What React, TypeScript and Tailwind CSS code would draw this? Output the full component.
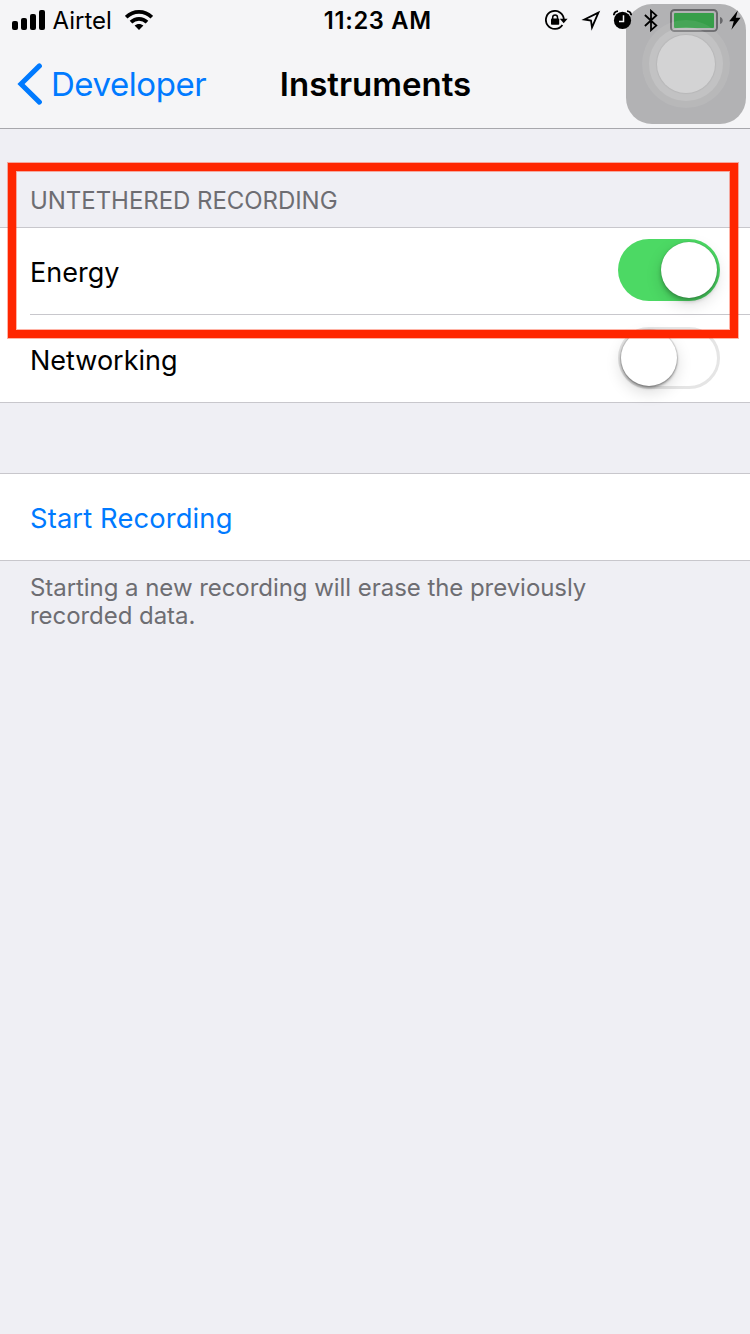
import React from "react";

const FONT = "font-['Inter','Liberation_Sans',sans-serif]";

function SignalIcon() {
  return (
    <svg className="ml-3 h-5 w-[33px] shrink-0" viewBox="0 0 33 20">
      <rect x="0" y="11" width="6" height="9" rx="2" />
      <rect x="9" y="8" width="6" height="12" rx="2" />
      <rect x="18" y="4" width="6" height="16" rx="2" />
      <rect x="27" y="0" width="6" height="20" rx="2" />
    </svg>
  );
}

function WifiIcon() {
  return (
    <svg className="h-5 w-7 shrink-0" viewBox="0 0 28 20">
      <g fill="none" stroke="#000" strokeWidth="3.7">
        <path d="M1.2 7.2C8.4 0.1 19.6 0.1 26.8 7.2" />
        <path d="M6 12.1C10.5 7.7 17.5 7.7 22 12.1" />
      </g>
      <path d="M9.6 15.6C12 13.3 16 13.3 18.4 15.6L14 20Z" />
    </svg>
  );
}

function RotationLockIcon() {
  return (
    <svg className="h-5 w-[23px] shrink-0" viewBox="0 0 23 20">
      <path d="M17.4 14.9A9 9 0 1 1 18.9 9.6" fill="none" stroke="#000" strokeWidth="1.8" />
      <path d="M14.8 8.8H22.6L18.7 13.2Z" />
      <rect x="6" y="8.4" width="8.2" height="6.4" rx="0.8" />
      <path d="M7.7 9V7.3a2.4 2.4 0 0 1 4.8 0V9" fill="none" stroke="#000" strokeWidth="1.5" />
    </svg>
  );
}

function LocationIcon() {
  return (
    <svg className="h-[21px] w-5 shrink-0" viewBox="0 0 20 21">
      <path d="M17.4 2.6L3.4 9.5L10 10.5L11 17.4Z" fill="none" stroke="#000" strokeWidth="1.8" strokeMiterlimit="10" />
    </svg>
  );
}

function AlarmIcon() {
  return (
    <svg className="h-5 w-[19px] shrink-0" viewBox="0 0 19 20">
      <circle cx="9.5" cy="10.4" r="8.6" />
      <path d="M0.8 5.2C1 3 2.8 1.5 5 1.2M18.2 5.2C18 3 16.2 1.5 14 1.2" fill="none" stroke="#000" strokeWidth="1.8" />
      <path d="M10.5 5.2V11.4H6" fill="none" stroke="#f5f5f7" strokeWidth="1.5" />
    </svg>
  );
}

function BluetoothIcon() {
  return (
    <svg className="h-[23px] w-3.5 shrink-0" viewBox="0 0 14 23">
      <path d="M0.9 6L12.3 16.6L7 21.2V1.8L12.3 6.4L0.9 17" fill="none" stroke="#000" strokeWidth="1.8" />
    </svg>
  );
}

function BatteryIcon() {
  return (
    <svg className="h-[23px] w-[53px] shrink-0" viewBox="0 0 53 23">
      <rect x="1" y="1" width="46" height="21" rx="3.6" fill="none" stroke="#8f8f93" strokeWidth="2" />
      <rect x="4" y="4" width="40" height="15" rx="1" fill="#4cd964" />
      <path d="M50 8C53.6 8.8 53.6 14.2 50 15Z" fill="#8f8f93" />
    </svg>
  );
}

function BoltIcon() {
  return (
    <svg className="h-5 w-3 shrink-0" viewBox="0 0 12 20">
      <path d="M8.9 0.2L0.2 11.3H4.8L2.4 19.8L11.6 7.7H6.8Z" />
    </svg>
  );
}

function StatusBar() {
  return (
    <div className="flex h-10 items-center">
      <div className="flex flex-1 items-center">
        <SignalIcon />
        <span className="ml-[7.5px] w-[64.5px] pt-px text-[24px] leading-none">Airtel</span>
        <span className="ml-2">
          <WifiIcon />
        </span>
      </div>
      <span className="pl-[15px] pt-px text-[23.7px] font-[580] leading-none tracking-[0.7px]">11:23 AM</span>
      <div className="flex flex-1 items-center justify-end pr-[9.5px]">
        <RotationLockIcon />
        <span className="ml-[13px]">
          <LocationIcon />
        </span>
        <span className="ml-3">
          <AlarmIcon />
        </span>
        <span className="ml-3">
          <BluetoothIcon />
        </span>
        <span className="ml-3">
          <BatteryIcon />
        </span>
        <span className="ml-[5.5px]">
          <BoltIcon />
        </span>
      </div>
    </div>
  );
}

function NavBar() {
  return (
    <div className="flex h-[88px] items-center">
      <button className="flex flex-1 items-center text-[#007aff]">
        <svg className="ml-[17px] h-[42px] w-[26px]" viewBox="0 0 26 42" fill="none" stroke="currentColor" strokeWidth="5" strokeLinecap="round" strokeLinejoin="miter">
          <path d="M22.4 2.9L4 21L22.4 39.1" />
        </svg>
        <span className="ml-2 text-[33px] leading-none tracking-[-0.45px]">Developer</span>
      </button>
      <h1 className="pl-px text-[33px] font-semibold leading-none">Instruments</h1>
      <div className="flex-1" />
    </div>
  );
}

function Switch({ on }: { on: boolean }) {
  return (
    <span
      role="switch"
      aria-checked={on}
      className={
        on
          ? "flex h-[62px] w-[102px] items-center justify-end rounded-full bg-[#4cd964] pr-[3px]"
          : "flex h-[62px] w-[102px] items-center rounded-full border-[3px] border-[#e5e5e5] bg-white"
      }
    >
      <span
        className={
          on
            ? "size-14 rounded-full bg-white shadow-[0_0_1px_rgba(0,0,0,0.3),0_3px_4px_rgba(0,0,0,0.25),0_6px_16px_rgba(0,0,0,0.15)]"
            : "size-14 rounded-full bg-white shadow-[0_0_1px_1px_rgba(0,0,0,0.12),0_2px_3px_rgba(0,0,0,0.35),0_6px_16px_rgba(0,0,0,0.15)]"
        }
      />
    </span>
  );
}

function AssistiveTouch() {
  return (
    <div className="absolute left-[626px] top-1 flex size-[120px] items-center justify-center rounded-[26px] bg-black/27">
      <div className="flex size-[88px] items-center justify-center rounded-full bg-white/8">
        <div className="flex size-[74px] items-center justify-center rounded-full bg-white/14">
          <div className="size-[58px] rounded-full bg-white/28 shadow-[0_0_1px_1px_rgba(0,0,0,0.05)]" />
        </div>
      </div>
    </div>
  );
}

export default function App() {
  return (
    <div className={`relative h-[1334px] w-[750px] overflow-hidden bg-[#efeff4] text-black ${FONT}`}>
      <header className="border-b border-[#a7a7ac] bg-[#f5f5f7]">
        <StatusBar />
        <NavBar />
      </header>

      <main>
        <h2 className="flex h-[98px] items-end pb-[14px] pl-[30px] text-[24px] leading-[24px] tracking-[-0.05px] text-[#6d6d72]">
          UNTETHERED RECORDING
        </h2>
        <section className="border-y border-[#c8c7cc] bg-white text-[27px] leading-none">
          <div className="ml-[30px] flex h-[87px] items-center justify-between border-b border-[#c8c7cc] pb-0.5 pr-[30px]">
            <span className="pt-1">Energy</span>
            <Switch on />
          </div>
          <div className="ml-[30px] flex h-[87px] items-center justify-between pb-0.5 pr-[30px]">
            <span className="pt-[5px]">Networking</span>
            <Switch on={false} />
          </div>
        </section>

        <section className="mt-[70px] border-y border-[#c8c7cc] bg-white text-[27.3px] leading-none">
          <button className="flex h-[86px] w-full items-center pl-[30px] pt-1 tracking-[0.15px] text-[#007aff]">
            Start Recording
          </button>
        </section>
        <p className="w-[620px] pl-[30px] pt-[13px] text-[24px] leading-7 tracking-[-0.05px] text-[#6d6d72]">
          Starting a new recording will erase the previously recorded data.
        </p>
      </main>

      <div className="pointer-events-none absolute left-2 top-[163px] h-[175px] w-[730px] border-8 border-[#ff2600] shadow-[0_0_0_1px_rgba(255,38,0,0.35),inset_0_0_0_1px_rgba(255,38,0,0.35)]" />
      <AssistiveTouch />
    </div>
  );
}
